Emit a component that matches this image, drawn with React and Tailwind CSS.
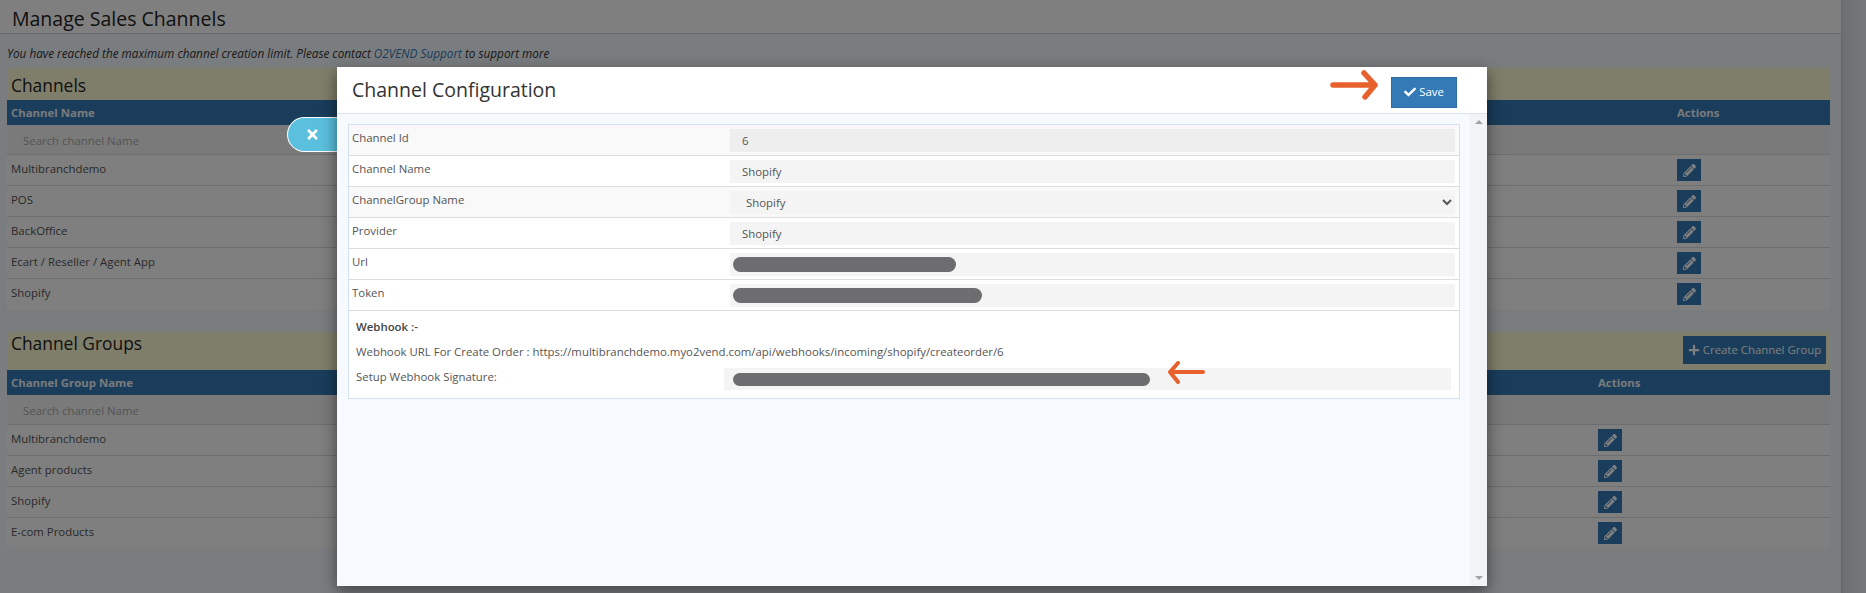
import React from 'react';
import { FaCheck, FaTimes, FaPencilAlt, FaPlus } from 'react-icons/fa';

const channels = ['Multibranchdemo', 'POS', 'BackOffice', 'Ecart / Reseller / Agent App', 'Shopify'];
const groups = ['Multibranchdemo', 'Agent products', 'Shopify', 'E-com Products'];

const TableSection = ({ nameLabel, rows, actionWidth }) => (
    <div className="bg-white">
        <div className="flex h-[25px] items-center bg-[#337ab7] text-[11.4px] font-bold text-[#f0f4f8]">
            <div className="flex-1 pl-[4px]">{nameLabel}</div>
            <div className={actionWidth}>Actions</div>
        </div>
        <div className="flex h-[30px] items-center border-b border-[#ddd] bg-[#f5f5f5] pl-[16px] pt-[2px] text-[11.4px] text-[#aaa]">
            Search channel Name
        </div>
        {rows.map((name) => (
            <div key={name} className="flex h-[31px] items-center border-b border-[#ddd] text-[11.4px] text-[#555] last:border-transparent">
                <div className="flex-1 pb-[2px] pl-[4px]">{name}</div>
                <div className={actionWidth}>
                    <button className="flex h-[22px] w-[24px] items-center justify-center bg-[#337ab7] text-white">
                        <FaPencilAlt className="h-[13px] w-[13px]" />
                    </button>
                </div>
            </div>
        ))}
    </div>
);

const FormRow = ({ label, value, dark, striped }) => (
    <div className={`flex h-[31px] border-b border-[#ddd] pt-[4px] pl-[3px] pr-[4px] ${striped ? 'bg-[#f9f9f9]' : ''}`}>
        <label className="w-[378px] text-[11.4px] leading-[18px] text-[#555]">{label}</label>
        <input
            readOnly
            defaultValue={value}
            className={`h-[23px] flex-1 px-[12px] text-[11.4px] text-[#555] outline-none ${dark ? 'bg-[#eeeeee]' : 'bg-[#f4f4f4]'}`}
        />
    </div>
);

const SecretRow = ({ label, barWidth }) => (
    <div className="flex h-[31px] border-b border-[#ddd] pt-[4px] pl-[3px] pr-[4px]">
        <label className="w-[378px] text-[11.4px] leading-[18px] text-[#555]">{label}</label>
        <div className="relative h-[23px] flex-1 bg-[#f4f4f4]">
            <div className={`absolute left-[3px] top-[4px] h-[15px] rounded-full bg-[#6d6d70] ${barWidth}`}></div>
        </div>
    </div>
);

export default function App() {
    return (
        <div className="relative flex h-[593px] w-[1866px] overflow-hidden bg-[#f5fbff] font-['Open_Sans',sans-serif]">
            {/* Page behind the dialog */}
            <div className="flex-1">
                <div className="flex h-[34px] items-center border-b border-[#c4d3e0] bg-white pl-3 pt-[5px] text-[19.5px] text-[#222]">
                    Manage Sales Channels
                </div>
                <div className="pl-[7px] pr-[11px]">
                    <p className="mt-[11px] h-[23px] text-[11.75px] italic text-[#333]">
                        You have reached the maximum channel creation limit. Please contact{' '}
                        <span className="text-[#337ab7]">O2VEND Support</span> to support more
                    </p>
                    <div className="flex h-[32px] items-center bg-[#fffcd4] pl-[4px] pt-[2px] text-[17.4px] text-[#222]">Channels</div>
                    <TableSection nameLabel="Channel Name" rows={channels} actionWidth="w-[153px]" />

                    <div className="mt-[22px] flex h-[38px] items-start justify-between bg-[#fffcd4] pr-[4px] pl-[4px]">
                        <span className="text-[17.4px] leading-[22px] text-[#222]">Channel Groups</span>
                        <button className="mt-[4px] flex h-[28px] w-[143px] items-center justify-center gap-[3px] bg-[#337ab7] text-[11.4px] text-white">
                            <FaPlus className="h-[12px] w-[12px]" />
                            Create Channel Group
                        </button>
                    </div>
                    <TableSection nameLabel="Channel Group Name" rows={groups} actionWidth="w-[232px]" />
                </div>
            </div>
            <div className="w-[25px] border-l border-[#c9d3dc] bg-gradient-to-r from-[#dadde0] to-[#eef0f2]"></div>

            {/* Backdrop */}
            <div className="absolute inset-0 bg-black/50"></div>

            {/* Close tab */}
            <button className="absolute left-[287px] top-[117px] flex h-[35px] w-[51px] items-center justify-center rounded-l-[18px] border border-r-0 border-white bg-[#5bc0de] pr-[2px] text-white">
                <FaTimes className="h-[15px] w-[13px]" />
            </button>

            {/* Dialog */}
            <div className="absolute left-[337px] top-[67px] flex h-[519px] w-[1150px] flex-col bg-[#f6fafe] shadow-[0_5px_15px_rgba(0,0,0,0.5)]">
                <div className="relative flex h-[47px] shrink-0 items-center justify-between border-b border-[#dbe3ea] bg-white pl-[15px] pr-[30px]">
                    <h4 className="text-[19.5px] text-[#333]">Channel Configuration</h4>
                    <button className="mt-[4px] flex h-[31px] w-[66px] items-center justify-center gap-[3px] border border-[#2e6da4] bg-[#337ab7] text-[11.4px] text-white">
                        <FaCheck className="h-[12px] w-[12px]" />
                        Save
                    </button>
                    <svg className="absolute left-[993px] top-[3px] h-[30px] w-[48px]" viewBox="0 0 48 30" fill="none" stroke="#e8602c" strokeWidth="5.5" strokeLinecap="round" strokeLinejoin="round">
                        <path d="M3 15H45M34 3L45 15L35 27" />
                    </svg>
                </div>

                <div className="flex min-h-0 flex-1">
                    <div className="flex-1 pl-[11px] pr-[10px] pt-[10px]">
                        <div className="h-[275px] border border-[#d3e2ee] bg-white">
                            <FormRow label="Channel Id" value="6" dark striped />
                            <FormRow label="Channel Name" value="Shopify" />
                            <div className="flex h-[31px] border-b border-[#ddd] bg-[#f9f9f9] pt-[4px] pl-[3px] pr-[4px]">
                                <label className="w-[378px] text-[11.4px] leading-[18px] text-[#555]">ChannelGroup Name</label>
                                <select defaultValue="Shopify" className="h-[23px] flex-1 bg-[#f4f4f4] px-[12px] text-[11.4px] text-[#555] outline-none">
                                    <option>Shopify</option>
                                </select>
                            </div>
                            <FormRow label="Provider" value="Shopify" />
                            <SecretRow label="Url" barWidth="w-[223px]" />
                            <SecretRow label="Token" barWidth="w-[249px]" />

                            <div className="relative pl-[7px] pt-[7px] text-[11.4px] text-[#555]">
                                <p className="h-[25px] font-semibold leading-[18px] text-[#444]">Webhook :-</p>
                                <p className="h-[25px] leading-[18px]">
                                    Webhook URL For Create Order : https://multibranchdemo.myo2vend.com/api/webhooks/incoming/shopify/createorder/6
                                </p>
                                <div className="flex h-[22px] pr-[8px]">
                                    <span className="w-[368px] leading-[18px]">Setup Webhook Signature:</span>
                                    <div className="relative flex-1 bg-[#f4f4f4]">
                                        <div className="absolute left-[9px] top-[5px] h-[13px] w-[417px] rounded-full bg-[#6d6d70]"></div>
                                        <svg className="absolute left-[443px] top-[-7px] h-[23px] w-[38px]" viewBox="0 0 38 23" fill="none" stroke="#e8602c" strokeWidth="4" strokeLinecap="round" strokeLinejoin="round">
                                            <path d="M36 11H3M11 2L3 11L11 21" />
                                        </svg>
                                    </div>
                                </div>
                            </div>
                        </div>
                    </div>

                    {/* Scrollbar */}
                    <div className="flex w-[17px] flex-col items-center justify-between bg-[#f1f3f5] py-[6px]">
                        <span className="h-0 w-0 border-x-[4px] border-b-[4px] border-x-transparent border-b-[#a3a3a3]"></span>
                        <span className="h-0 w-0 border-x-[4px] border-t-[4px] border-x-transparent border-t-[#a3a3a3]"></span>
                    </div>
                </div>
            </div>
        </div>
    );
}
